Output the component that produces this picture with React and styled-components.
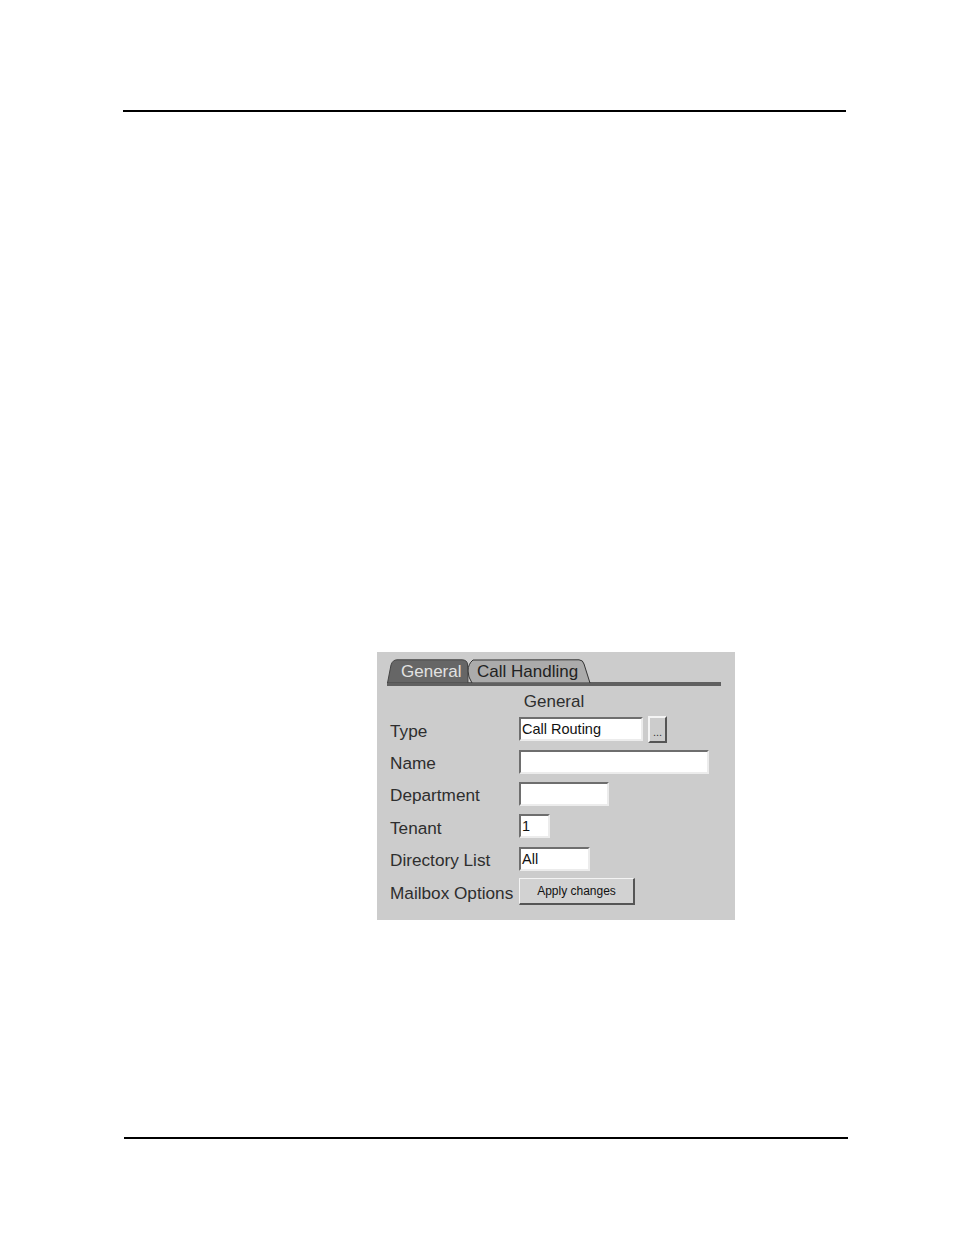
import React from "react";
import styled, { createGlobalStyle } from "styled-components";

const Global = createGlobalStyle`
  html, body { margin: 0; padding: 0; background: #fff; }
  body { font-family: "Liberation Sans", Arial, sans-serif; }
`;

const Page = styled.div`
  width: 954px;
  height: 1235px;
  box-sizing: border-box;
  padding-top: 110px;
  display: flex;
  flex-direction: column;
  align-items: flex-start;
`;

const Rule = styled.div`
  height: 2px;
  background: #000;
  margin-left: ${(p) => p.$left}px;
  width: ${(p) => p.$width}px;
  margin-top: ${(p) => p.$top || 0}px;
`;

const Panel = styled.div`
  margin-top: 540px;
  margin-left: 377px;
  width: 358px;
  height: 268px;
  box-sizing: border-box;
  background: #cccccc;
  padding: 7px 14px 0 10px;
  display: flex;
  flex-direction: column;
  color: #2e2e2e;
  font-size: 17px;
`;

const TabRow = styled.div`
  display: flex;
  height: 24px;
  position: relative;
  z-index: 1;
`;

const Tab = styled.div`
  position: relative;
  width: ${(p) => p.$w}px;
  margin-left: ${(p) => p.$ml || 0}px;
  height: 24px;
  box-sizing: border-box;
  padding-left: ${(p) => p.$pl}px;
  line-height: 25px;
  font-size: 17px;
  color: ${(p) => (p.$active ? "#e2e2e2" : "#222")};
  z-index: ${(p) => (p.$active ? 2 : 1)};
`;

const TabShape = styled.svg`
  position: absolute;
  inset: 0;
  z-index: -1;
`;

const TabLabel = styled.span`
  position: relative;
`;

const TabLine = styled.div`
  height: 4px;
  margin-top: -1px;
  background: #606060;
`;

const Heading = styled.div`
  height: 27px;
  box-sizing: border-box;
  padding-top: 5px;
  line-height: 22px;
  text-align: center;
`;

const Form = styled.div`
  display: grid;
  grid-template-columns: 129px 1fr;
  grid-auto-rows: 32.4px;
  align-items: center;
  padding-left: 3px;
`;

const Label = styled.div`
  font-size: 17.2px;
  line-height: 20px;
  padding-top: 3px;
  white-space: nowrap;
`;

const Field = styled.div`
  display: flex;
  align-items: center;
  gap: 5px;
`;

const Input = styled.div`
  width: ${(p) => p.$w}px;
  height: 24px;
  box-sizing: border-box;
  background: #fff;
  border-top: 2px solid #6e6e6e;
  border-left: 2px solid #6e6e6e;
  border-right: 2px solid #ececec;
  border-bottom: 2px solid #ececec;
  font-size: 14.5px;
  line-height: 21px;
  padding-left: 1px;
  color: #111;
  white-space: nowrap;
  overflow: hidden;
`;

const SmallButton = styled.div`
  width: 19px;
  height: 27px;
  box-sizing: border-box;
  background: #cccccc;
  border-top: 2px solid #f4f4f4;
  border-left: 2px solid #f4f4f4;
  border-right: 2px solid #555;
  border-bottom: 2px solid #555;
  font-size: 11px;
  line-height: 12px;
  text-align: center;
  padding-top: 8px;
  color: #333;
`;

const Button = styled.div`
  width: 116px;
  height: 27px;
  box-sizing: border-box;
  background: #d2d2d2;
  border-top: 1px solid #f4f4f4;
  border-left: 1px solid #f4f4f4;
  border-right: 2px solid #555;
  border-bottom: 2px solid #555;
  font-size: 12px;
  line-height: 25px;
  text-align: center;
  color: #111;
`;

const rows = [
  { label: "Type", w: 124, value: "Call Routing", more: true },
  { label: "Name", w: 190, value: "" },
  { label: "Department", w: 90, value: "" },
  { label: "Tenant", w: 31, value: "1" },
  { label: "Directory List", w: 71, value: "All" },
];

export default function App() {
  return (
    <>
      <Global />
      <Page>
        <Rule $left={123} $width={723} />
        <Panel>
          <TabRow>
            <Tab $w={82} $pl={14} $active>
              <TabShape width="82" height="24" viewBox="0 0 82 24">
                <path
                  d="M0.5 24 L4 6 Q5.5 1 10 0.8 L75 0.8 Q80 1 80.5 5 L81 24 Z"
                  fill="#666"
                  stroke="#444"
                  strokeWidth="1"
                />
              </TabShape>
              <TabLabel>General</TabLabel>
            </Tab>
            <Tab $w={124} $ml={-2} $pl={10}>
              <TabShape width="124" height="24" viewBox="0 0 124 24">
                <path
                  d="M5 24 Q1 18 1 12 Q1 5 6 1 L112 0.8 Q116 1 117 5 L123 24 Z"
                  fill="#ababab"
                  stroke="#333"
                  strokeWidth="1"
                />
              </TabShape>
              <TabLabel>Call Handling</TabLabel>
            </Tab>
          </TabRow>
          <TabLine />
          <Heading>General</Heading>
          <Form>
            {rows.map((r) => (
              <React.Fragment key={r.label}>
                <Label>{r.label}</Label>
                <Field>
                  <Input $w={r.w}>{r.value}</Input>
                  {r.more && <SmallButton>...</SmallButton>}
                </Field>
              </React.Fragment>
            ))}
            <Label>Mailbox Options</Label>
            <Field>
              <Button>Apply changes</Button>
            </Field>
          </Form>
        </Panel>
        <Rule $left={124} $width={724} $top={217} />
      </Page>
    </>
  );
}
